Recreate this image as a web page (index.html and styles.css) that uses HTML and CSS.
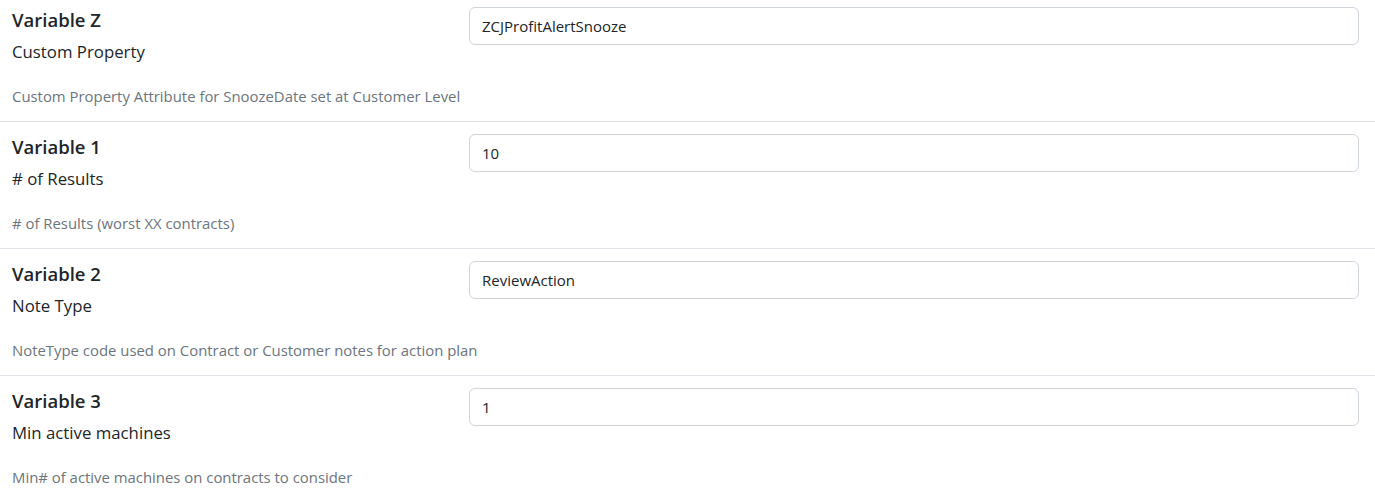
FILE: index.html
```html
<!DOCTYPE html>
<html>
<head>
<meta charset="utf-8">
<link rel="stylesheet" href="styles.css">
</head>
<body>
<div class="list">
  <div class="row">
    <div class="info">
      <div class="title">Variable Z</div>
      <div class="subtitle">Custom Property</div>
      <div class="desc">Custom Property Attribute for SnoozeDate set at Customer Level</div>
    </div>
    <div class="field"><input class="input" type="text" value="ZCJProfitAlertSnooze"></div>
  </div>
  <div class="row">
    <div class="info">
      <div class="title">Variable 1</div>
      <div class="subtitle"># of Results</div>
      <div class="desc"># of Results (worst XX contracts)</div>
    </div>
    <div class="field"><input class="input" type="text" value="10"></div>
  </div>
  <div class="row">
    <div class="info">
      <div class="title">Variable 2</div>
      <div class="subtitle">Note Type</div>
      <div class="desc">NoteType code used on Contract or Customer notes for action plan</div>
    </div>
    <div class="field"><input class="input" type="text" value="ReviewAction"></div>
  </div>
  <div class="row">
    <div class="info">
      <div class="title">Variable 3</div>
      <div class="subtitle">Min active machines</div>
      <div class="desc">Min# of active machines on contracts to consider</div>
    </div>
    <div class="field"><input class="input" type="text" value="1"></div>
  </div>
</div>
</body>
</html>
```
FILE: styles.css
```css
html, body {
  margin: 0;
  padding: 0;
  background: #ffffff;
}
body {
  font-family: "Open Sans", "Noto Sans", sans-serif;
  color: #212529;
}
.list {
  margin-top: -5px;
}
.row {
  display: grid;
  grid-template-columns: 445px 1fr;
  column-gap: 12px;
  padding: 12px 16px 15px 12px;
  border-bottom: 1px solid #dee2e6;
}
.row:last-child {
  border-bottom: none;
}
.title {
  font-size: 18.5px;
  font-weight: 600;
  line-height: 26px;
}
.subtitle {
  margin-top: 7px;
  font-size: 16.8px;
  line-height: 24px;
  white-space: nowrap;
}
.desc {
  margin-top: 22px;
  font-size: 14.9px;
  line-height: 20px;
  color: #6c757d;
  white-space: nowrap;
}
.input {
  box-sizing: border-box;
  width: 100%;
  height: 38px;
  margin: 0;
  padding: 0 12px;
  border: 1px solid #ced4da;
  border-radius: 6px;
  font-family: "Open Sans", "Noto Sans", sans-serif;
  font-size: 15px;
  color: #212529;
  background: #fff;
  outline: none;
}
```
